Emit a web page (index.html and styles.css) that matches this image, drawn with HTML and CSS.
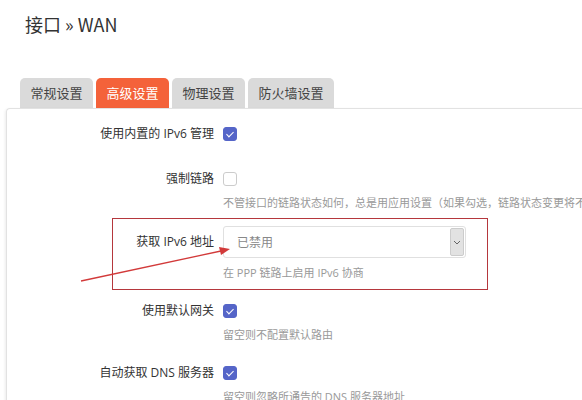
FILE: index.html
```html
<!DOCTYPE html>
<html lang="zh-CN">
<head>
	<meta charset="UTF-8">
	<title>接口 - WAN</title>
	<link rel="stylesheet" href="styles.css">
</head>
<body>
	<h2 class="title">接口 » WAN</h2>

	<ul class="tabs">
		<li>常规设置</li>
		<li class="current">高级设置</li>
		<li>物理设置</li>
		<li>防火墙设置</li>
	</ul>

	<div class="panel">
		<div class="field">
			<label class="name">使用内置的 IPv6 管理</label>
			<div class="value"><span class="check on"></span></div>
		</div>

		<div class="field">
			<label class="name">强制链路</label>
			<div class="value"><span class="check"></span></div>
			<div class="desc">不管接口的链路状态如何，总是用应用设置（如果勾选，链路状态变更将不再触发热插拔事件）</div>
		</div>

		<div class="field">
			<label class="name">获取 IPv6 地址</label>
			<div class="value tall">
				<div class="select">
					<span>已禁用</span>
					<i class="drop"><svg width="8" height="5" viewBox="0 0 8 5"><path d="M1 1l3 3 3-3" fill="none" stroke="#666" stroke-width="1"/></svg></i>
				</div>
			</div>
			<div class="desc gap">在 PPP 链路上启用 IPv6 协商</div>
		</div>

		<div class="field">
			<label class="name">使用默认网关</label>
			<div class="value"><span class="check on"></span></div>
			<div class="desc">留空则不配置默认路由</div>
		</div>

		<div class="field">
			<label class="name">自动获取 DNS 服务器</label>
			<div class="value"><span class="check on"></span></div>
			<div class="desc">留空则忽略所通告的 DNS 服务器地址</div>
		</div>

		<!-- 标注：红框和箭头 -->
		<div class="mark"></div>
		<svg class="arrow" width="160" height="40" viewBox="0 0 160 40">
			<line x1="2" y1="37" x2="142" y2="7" stroke="#d23a3a" stroke-width="1.3"/>
			<path d="M151 5 L140 3 L142 11 Z" fill="#d23a3a"/>
		</svg>
	</div>
</body>
</html>
```

FILE: styles.css
```css
*{
	margin: 0;
	padding: 0;
	box-sizing: border-box;
}
body{
	width: 582px;
	height: 400px;
	overflow: hidden;
	background: #fff;
	font-family: "Open Sans", "Noto Sans CJK SC", sans-serif;
	color: #333;
	position: relative;
}
.title{
	font-family: "Noto Sans CJK SC", sans-serif;
	font-size: 18px;
	font-weight: normal;
	line-height: 24px;
	padding: 12px 0 0 25px;
	color: #333;
}
.tabs{
	display: flex;
	gap: 3px;
	list-style: none;
	margin-top: 42px;
	padding-left: 20px;
}
.tabs li{
	height: 30px;
	line-height: 30px;
	padding: 0 10.5px;
	font-size: 13px;
	color: #444;
	background: #dadada;
	border-radius: 5px 5px 0 0;
}
.tabs li.current{
	background: #f4623a;
	color: #fff;
}
.panel{
	margin-left: 6px;
	width: 600px;
	height: 300px;
	border: 1px solid #e2e2e2;
	border-right: none;
	border-radius: 4px 0 0 0;
	box-shadow: -1px 1px 3px rgba(0,0,0,0.08);
	padding-top: 10px;
	display: flex;
	flex-direction: column;
	gap: 15px;
	position: relative;
}
.field{
	display: grid;
	grid-template-columns: 207px 1fr;
	column-gap: 9px;
}
.name{
	font-size: 12px;
	line-height: 30px;
	text-align: right;
	color: #333;
}
.value{
	height: 30px;
	display: flex;
	align-items: center;
}
.value.tall{
	height: 32px;
	align-items: stretch;
}
.field:has(.tall) .name{
	line-height: 32px;
}
.desc{
	grid-column: 2;
	font-size: 11px;
	line-height: 16px;
	margin-top: 1px;
	color: #999;
	white-space: nowrap;
	overflow: hidden;
}
.desc.gap{
	margin-top: 7px;
}
.check{
	width: 14px;
	height: 14px;
	border: 1px solid #ccc;
	border-radius: 3px;
	background: #fff;
	position: relative;
}
.check.on{
	background: #5565c8;
	border-color: #5565c8;
}
.check.on::after{
	content: "";
	position: absolute;
	left: 4px;
	top: 2px;
	width: 3px;
	height: 6px;
	border: solid #fff;
	border-width: 0 1.5px 1.5px 0;
	transform: rotate(45deg);
}
.select{
	width: 243px;
	border: 1px solid #e0e0e0;
	border-radius: 3px;
	display: flex;
	align-items: center;
	justify-content: space-between;
	padding: 0 1px 0 13px;
	font-size: 12px;
	color: #888;
}
.drop{
	width: 14px;
	height: 28px;
	background: #e2e2e2;
	border: 1px solid #ccc;
	border-radius: 2px;
	display: flex;
	align-items: center;
	justify-content: center;
}
.mark{
	position: absolute;
	left: 105px;
	top: 109px;
	width: 376px;
	height: 72px;
	border: 1px solid #b5373d;
}
.arrow{
	position: absolute;
	left: 72px;
	top: 135px;
}
```
